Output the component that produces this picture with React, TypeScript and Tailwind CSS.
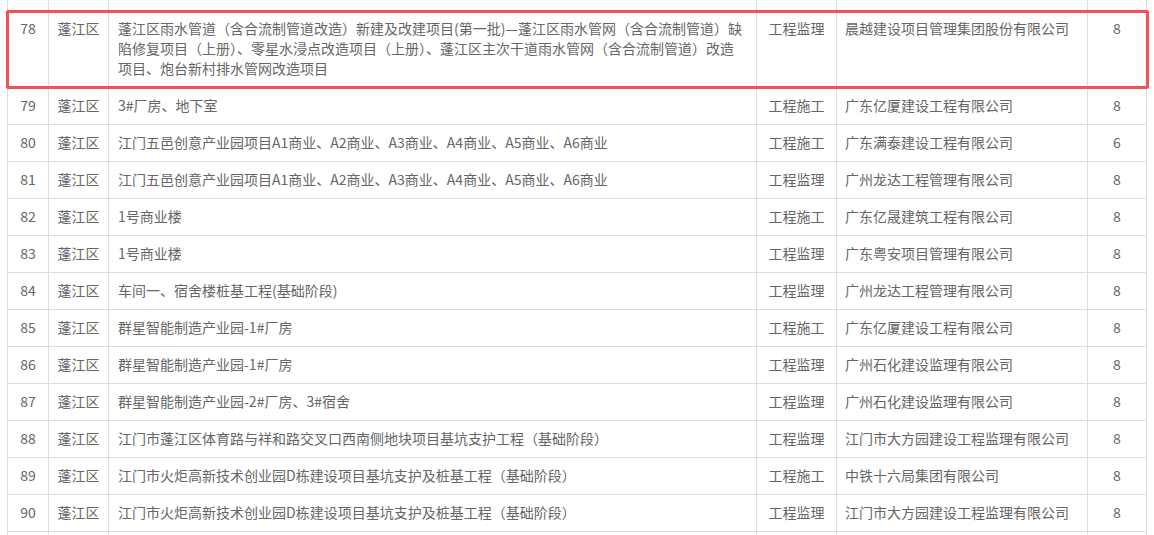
import React from "react";

type Row = { n: string; area: string; name: React.ReactNode; type: string; company: string; score: string };

const rows: Row[] = [
  { n: "79", area: "蓬江区", name: "3#厂房、地下室", type: "工程施工", company: "广东亿厦建设工程有限公司", score: "8" },
  { n: "80", area: "蓬江区", name: "江门五邑创意产业园项目A1商业、A2商业、A3商业、A4商业、A5商业、A6商业", type: "工程施工", company: "广东满泰建设工程有限公司", score: "6" },
  { n: "81", area: "蓬江区", name: "江门五邑创意产业园项目A1商业、A2商业、A3商业、A4商业、A5商业、A6商业", type: "工程监理", company: "广州龙达工程管理有限公司", score: "8" },
  { n: "82", area: "蓬江区", name: "1号商业楼", type: "工程施工", company: "广东亿晟建筑工程有限公司", score: "8" },
  { n: "83", area: "蓬江区", name: "1号商业楼", type: "工程监理", company: "广东粤安项目管理有限公司", score: "8" },
  { n: "84", area: "蓬江区", name: "车间一、宿舍楼桩基工程(基础阶段)", type: "工程监理", company: "广州龙达工程管理有限公司", score: "8" },
  { n: "85", area: "蓬江区", name: "群星智能制造产业园-1#厂房", type: "工程施工", company: "广东亿厦建设工程有限公司", score: "8" },
  { n: "86", area: "蓬江区", name: "群星智能制造产业园-1#厂房", type: "工程监理", company: "广州石化建设监理有限公司", score: "8" },
  { n: "87", area: "蓬江区", name: "群星智能制造产业园-2#厂房、3#宿舍", type: "工程监理", company: "广州石化建设监理有限公司", score: "8" },
  { n: "88", area: "蓬江区", name: "江门市蓬江区体育路与祥和路交叉口西南侧地块项目基坑支护工程（基础阶段）", type: "工程监理", company: "江门市大方园建设工程监理有限公司", score: "8" },
  { n: "89", area: "蓬江区", name: "江门市火炬高新技术创业园D栋建设项目基坑支护及桩基工程（基础阶段）", type: "工程施工", company: "中铁十六局集团有限公司", score: "8" },
  { n: "90", area: "蓬江区", name: "江门市火炬高新技术创业园D栋建设项目基坑支护及桩基工程（基础阶段）", type: "工程监理", company: "江门市大方园建设工程监理有限公司", score: "8" },
];

function Cells({ r, h }: { r?: Row; h?: string }) {
  const base = "border-r border-[#dddddd] whitespace-nowrap overflow-hidden";
  const pad = r ? "pt-[7px] pb-[9px]" : "";
  return (
    <div className={`flex border-b border-[#dddddd] ${h ?? ""}`}>
      <div className={`${base} ${pad} w-[41px] shrink-0 text-center`}>{r?.n}</div>
      <div className={`${base} ${pad} w-[60px] shrink-0 text-center`}>{r?.area}</div>
      <div className={`${base} ${pad} w-[648px] shrink-0 pl-[9px]`}>{r?.name}</div>
      <div className={`${base} ${pad} w-[80px] shrink-0 text-center`}>{r?.type}</div>
      <div className={`${base} ${pad} w-[251px] shrink-0 pl-[8px]`}>{r?.company}</div>
      <div className={`${base} ${pad} w-[59px] shrink-0 text-center`}>{r?.score}</div>
    </div>
  );
}

export default function App() {
  const first: Row = {
    n: "78",
    area: "蓬江区",
    name: (
      <>
        蓬江区雨水管道（含合流制管道改造）新建及改建项目(第一批)—蓬江区雨水管网（含合流制管道）缺
        <br />
        陷修复项目（上册）、零星水浸点改造项目（上册）、蓬江区主次干道雨水管网（含合流制管道）改造
        <br />
        项目、炮台新村排水管网改造项目
      </>
    ),
    type: "工程监理",
    company: "晨越建设项目管理集团股份有限公司",
    score: "8",
  };
  return (
    <div
      className="relative w-[1154px] h-[535px] overflow-hidden bg-white text-[14px] leading-[20px] text-[#666666]"
      style={{ fontFamily: '"Noto Sans CJK SC", "Noto Sans", sans-serif' }}
    >
      <div className="ml-[7px] w-[1140px] border-l border-[#dddddd]">
        <Cells h="h-[11px]" />
        <Cells r={first} />
        {rows.map((r) => (
          <Cells key={r.n} r={r} />
        ))}
        <Cells h="h-[20px]" />
      </div>
      <div className="absolute left-[6px] top-[10px] w-[1143px] h-[79px] border-[3px] border-[#f25252] rounded-[2px] pointer-events-none" />
    </div>
  );
}
